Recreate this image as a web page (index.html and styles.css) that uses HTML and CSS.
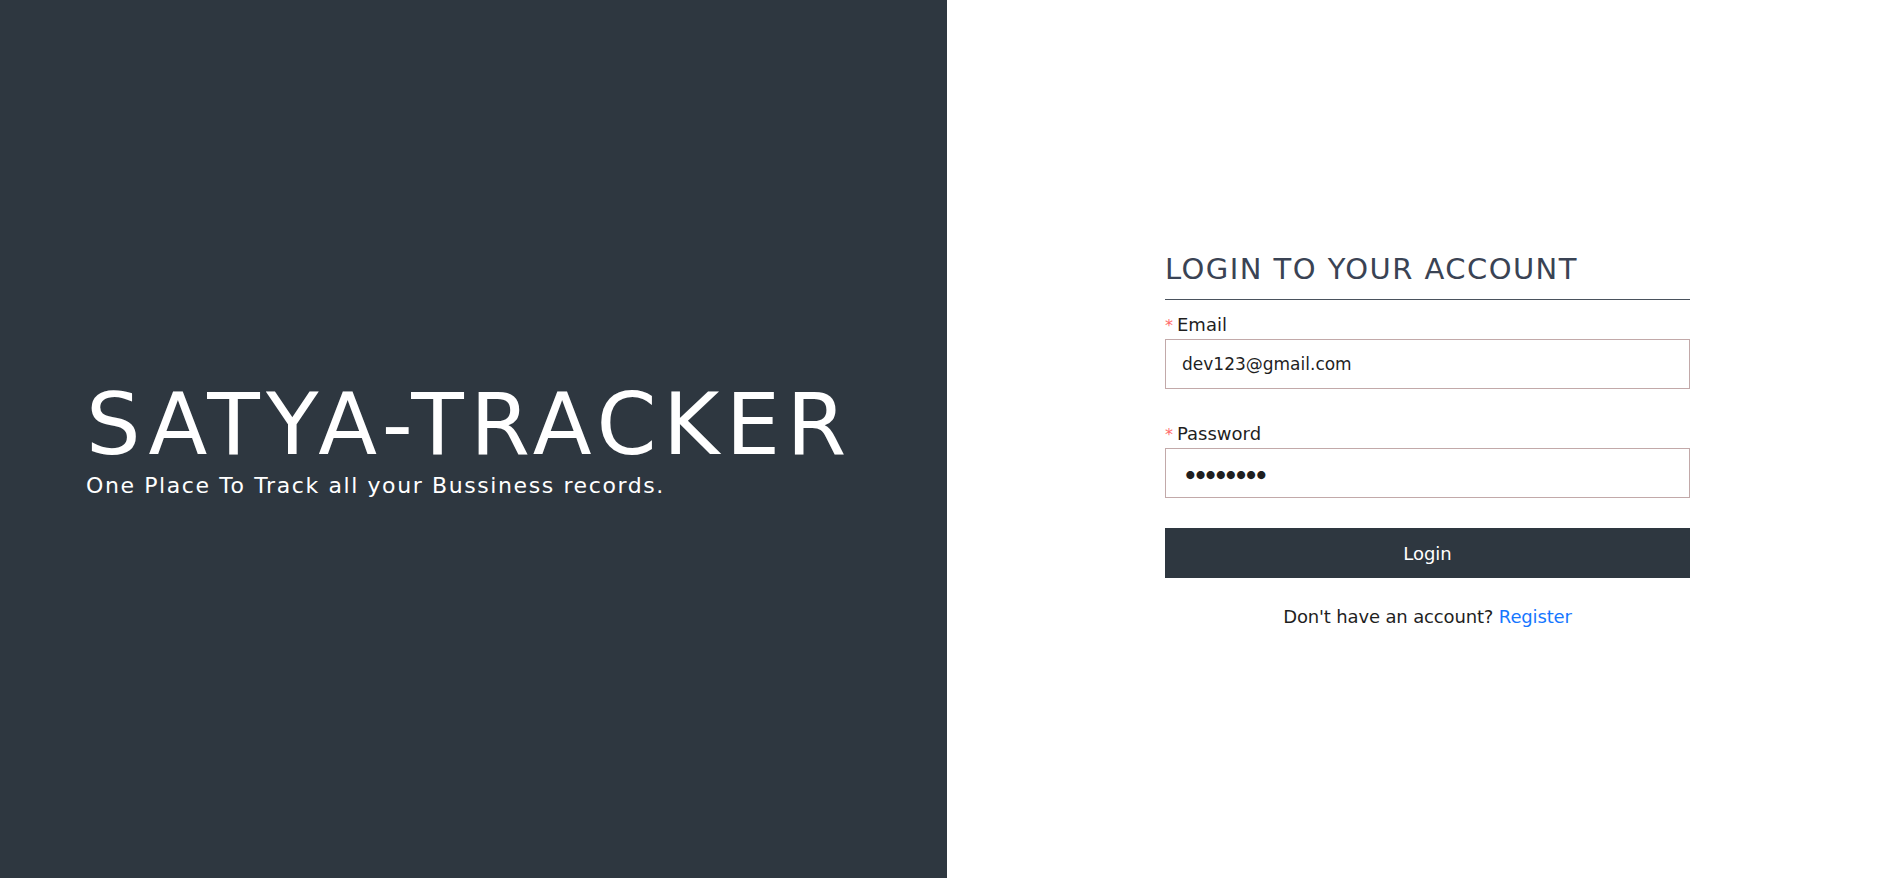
FILE: index.html
```html
<!DOCTYPE html>
<html lang="en">
<head>
<meta charset="utf-8">
<title>Satya-Tracker | Login</title>
<link rel="stylesheet" href="styles.css">
</head>
<body>
<main class="page">
  <section class="brand">
    <h1 class="brand-title">SATYA-TRACKER</h1>
    <p class="brand-sub">One Place To Track all your Bussiness records.</p>
  </section>
  <section class="auth">
    <form class="form">
      <h2 class="form-title">LOGIN TO YOUR ACCOUNT</h2>
      <div class="field">
        <label class="label" for="email"><span class="req">*</span>Email</label>
        <input class="input" id="email" type="email" value="dev123@gmail.com">
      </div>
      <div class="field">
        <label class="label" for="password"><span class="req">*</span>Password</label>
        <input class="input input-pass" id="password" type="password" value="dev12345">
      </div>
      <button class="btn" type="button">Login</button>
      <p class="alt">Don't have an account? <a href="#">Register</a></p>
    </form>
  </section>
</main>
</body>
</html>
```
FILE: styles.css
```css
* { box-sizing: border-box; }
html, body { margin: 0; height: 100%; }
body { font-family: "DejaVu Sans", sans-serif; background: #fff; }

.page { display: flex; height: 878px; }

.brand {
  width: 947px;
  flex: none;
  background: #2e3740;
  color: #fff;
  display: flex;
  flex-direction: column;
  justify-content: center;
  padding: 0 40px 0 86px;
}
.brand-title {
  margin: 0;
  font-size: 86px;
  font-weight: 400;
  line-height: 94px;
  letter-spacing: 6.4px;
  white-space: nowrap;
}
.brand-sub {
  margin: 0;
  font-size: 22px;
  line-height: 30px;
  letter-spacing: 1.6px;
  white-space: nowrap;
}

.auth {
  flex: 1;
  display: flex;
  align-items: center;
  justify-content: center;
  padding-left: 8px;
}
.form { width: 525px; }
.form-title {
  margin: 0 0 14px;
  padding-bottom: 11px;
  font-size: 29px;
  font-weight: 400;
  line-height: 38px;
  letter-spacing: 1.45px;
  color: #3a4354;
  border-bottom: 1px solid #4a525d;
  white-space: nowrap;
}
.field + .field { margin-top: 34px; }
.label {
  display: block;
  padding-bottom: 2px;
  font-size: 18px;
  line-height: 22px;
  color: #1f1f1f;
}
.req {
  color: #ff6b6b;
  font-size: 16px;
  margin-right: 4px;
}
.input {
  display: block;
  width: 100%;
  height: 50px;
  margin: 0;
  padding: 0 16px;
  border: 1px solid #c2a9a9;
  border-radius: 0;
  background: #fff;
  font-family: "DejaVu Sans", sans-serif;
  font-size: 17px;
  color: #1f1f1f;
  outline: none;
}
.input-pass {
  padding-left: 17px;
  font-family: Inter, sans-serif;
  font-size: 26px;
  letter-spacing: -4.5px;
}
.btn {
  display: block;
  width: 100%;
  height: 50px;
  margin-top: 30px;
  border: 0;
  border-radius: 0;
  background: #2e3740;
  color: #fff;
  font-family: "DejaVu Sans", sans-serif;
  font-size: 18px;
  cursor: pointer;
}
.alt {
  margin: 28px 0 0;
  text-align: center;
  font-size: 18px;
  line-height: 22px;
  letter-spacing: -0.15px;
  color: #1f1f1f;
}
.alt a { color: #1677ff; text-decoration: none; }
```
